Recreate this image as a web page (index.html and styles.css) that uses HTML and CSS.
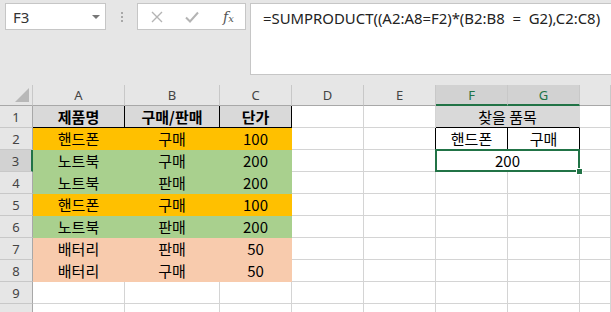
FILE: index.html
```html
<html>
<head>
    <title>SUMPRODUCT</title>
    <meta charset="UTF-8"/>
    <link rel="stylesheet" href="styles.css">
</head>
<body>
    <div class="toolbar">
        <div class="namebox">
            <span>F3</span>
            <span class="drop"></span>
        </div>
        <div class="grip"><i></i><i></i><i></i></div>
        <div class="fxbox">
            <svg class="ico" width="12" height="12" viewBox="0 0 12 12"><path d="M1 1L11 11M11 1L1 11" stroke="#b4b4b4" stroke-width="1.4" fill="none"/></svg>
            <svg class="ico" width="14" height="12" viewBox="0 0 14 12"><path d="M1 6.5L5 10.5L13 1.5" stroke="#b4b4b4" stroke-width="2" fill="none"/></svg>
            <span class="fx">f<small>x</small></span>
        </div>
        <div class="formula">=SUMPRODUCT((A2:A8=F2)*(B2:B8&nbsp; =&nbsp; G2),C2:C8)</div>
    </div>

    <div class="sheet">
        <div class="hd corner"><span class="tri"></span></div>
        <div class="hd col">A</div>
        <div class="hd col">B</div>
        <div class="hd col">C</div>
        <div class="hd col">D</div>
        <div class="hd col">E</div>
        <div class="hd col sel">F</div>
        <div class="hd col sel">G</div>
        <div class="hd col"></div>

        <div class="hd row">1</div>
        <div class="c th">제품명</div>
        <div class="c th">구매/판매</div>
        <div class="c th">단가</div>
        <div class="c"></div>
        <div class="c"></div>
        <div class="c gray span2">찾을 품목</div>
        <div class="c"></div>

        <div class="hd row">2</div>
        <div class="c orange">핸드폰</div>
        <div class="c orange">구매</div>
        <div class="c orange">100</div>
        <div class="c"></div>
        <div class="c edge-r"></div>
        <div class="c boxed">핸드폰</div>
        <div class="c boxed">구매</div>
        <div class="c"></div>

        <div class="hd row rsel">3</div>
        <div class="c green">노트북</div>
        <div class="c green">구매</div>
        <div class="c green">200</div>
        <div class="c"></div>
        <div class="c"></div>
        <div class="c span2 active">200</div>
        <div class="c"></div>

        <div class="hd row">4</div>
        <div class="c green">노트북</div>
        <div class="c green">판매</div>
        <div class="c green">200</div>
        <div class="c"></div><div class="c"></div><div class="c"></div><div class="c"></div><div class="c"></div>

        <div class="hd row">5</div>
        <div class="c orange">핸드폰</div>
        <div class="c orange">구매</div>
        <div class="c orange">100</div>
        <div class="c"></div><div class="c"></div><div class="c"></div><div class="c"></div><div class="c"></div>

        <div class="hd row">6</div>
        <div class="c green">노트북</div>
        <div class="c green">판매</div>
        <div class="c green">200</div>
        <div class="c"></div><div class="c"></div><div class="c"></div><div class="c"></div><div class="c"></div>

        <div class="hd row">7</div>
        <div class="c peach">배터리</div>
        <div class="c peach">판매</div>
        <div class="c peach">50</div>
        <div class="c"></div><div class="c"></div><div class="c"></div><div class="c"></div><div class="c"></div>

        <div class="hd row">8</div>
        <div class="c peach">배터리</div>
        <div class="c peach">구매</div>
        <div class="c peach">50</div>
        <div class="c"></div><div class="c"></div><div class="c"></div><div class="c"></div><div class="c"></div>

        <div class="hd row">9</div>
        <div class="c"></div><div class="c"></div><div class="c"></div><div class="c"></div>
        <div class="c"></div><div class="c"></div><div class="c"></div><div class="c"></div>

        <!-- row 10, only its top edge is in view -->
        <div class="hd row"></div>
        <div class="c"></div><div class="c"></div><div class="c"></div><div class="c"></div>
        <div class="c"></div><div class="c"></div><div class="c"></div><div class="c"></div>
    </div>
</body>
</html>
```
FILE: styles.css
```css
html, body {
    margin: 0;
    height: 312px;
    overflow: hidden;
    background: #fff;
    font-family: "Noto Sans", "Noto Sans CJK KR", sans-serif;
}
.toolbar {
    display: flex;
    align-items: flex-start;
    height: 85px;
    box-sizing: border-box;
    padding: 3px 0 0 5px;
    background: #e6e6e6;
}
.namebox {
    flex: 0 0 101px;
    height: 27px;
    box-sizing: border-box;
    border: 1px solid #c6c6c6;
    background: #fff;
    display: flex;
    align-items: center;
    justify-content: space-between;
    padding: 0 5px 0 7px;
    font-size: 15px;
    color: #333;
}
.drop {
    width: 0;
    height: 0;
    border-left: 4px solid transparent;
    border-right: 4px solid transparent;
    border-top: 4px solid #777;
}
.grip {
    flex: 0 0 31px;
    height: 27px;
    display: flex;
    flex-direction: column;
    align-items: center;
    justify-content: center;
    gap: 2px;
}
.grip i {
    width: 2px;
    height: 2px;
    background: #a8a8a8;
}
.fxbox {
    flex: 0 0 109px;
    height: 27px;
    box-sizing: border-box;
    border: 1px solid #c6c6c6;
    background: #fff;
    display: flex;
    align-items: center;
    padding: 0 0 0 13px;
}
.fxbox .ico {
    margin-right: 22px;
}
.fxbox .ico + .ico {
    margin-right: 24px;
}
.fx {
    font-family: "DejaVu Serif", serif;
    font-style: italic;
    font-size: 14px;
    color: #555;
}
.fx small {
    font-size: 10px;
}
.formula {
    flex: 1;
    min-width: 0;
    margin-left: 4px;
    height: 72px;
    box-sizing: border-box;
    border: 1px solid #c6c6c6;
    border-right: 0;
    background: #fff;
    padding: 4px 0 0 12px;
    font-size: 14.9px;
    color: #222;
    white-space: nowrap;
    overflow: hidden;
}
.sheet {
    display: grid;
    grid-template-columns: 33px 92px 95px 72px 72px 72px 72px 72px 1fr;
    grid-template-rows: 21px;
    grid-auto-rows: 22px;
    font-family: "Noto Sans CJK KR", sans-serif;
}
.sheet > div {
    box-sizing: border-box;
    border-right: 1px solid #d4d4d4;
    border-bottom: 1px solid #d4d4d4;
    display: flex;
    align-items: center;
    justify-content: center;
}
.hd {
    background: #e6e6e6;
    color: #444;
    font-family: "Noto Sans", sans-serif;
    font-size: 13px;
}
.sheet > .col {
    border-right-color: #c8c8c8;
    border-bottom-color: #a8a8a8;
}
.sheet > .row {
    border-right-color: #a8a8a8;
    border-bottom-color: #c8c8c8;
}
.sheet > .corner {
    border-right-color: #c8c8c8;
    border-bottom-color: #a8a8a8;
    position: relative;
}
.tri {
    position: absolute;
    right: 3px;
    bottom: 3px;
    width: 14px;
    height: 14px;
    background: #b8b8b8;
    clip-path: polygon(100% 0, 100% 100%, 0 100%);
}
.sheet > .sel {
    background: #d2d2d2;
    color: #217346;
    border-bottom: 2px solid #217346;
}
.sheet > .rsel {
    background: #d2d2d2;
    border-right: 2px solid #217346;
}
.c {
    font-size: 15px;
    color: #000;
}
.sheet > .th {
    background: #d9d9d9;
    font-weight: bold;
    border-color: #000;
}
.sheet > .gray {
    background: #d9d9d9;
    border-right-color: #d9d9d9;
    border-bottom-color: #000;
}
.span2 {
    grid-column: span 2;
}
.sheet > .orange {
    background: #ffc000;
    border-color: #ffc000;
}
.sheet > .green {
    background: #a9d08e;
    border-color: #a9d08e;
}
.sheet > .peach {
    background: #f8cbad;
    border-color: #f8cbad;
}
.sheet > .edge-r {
    border-right-color: #000;
}
.sheet > .boxed {
    border-right-color: #000;
    border-bottom-color: #000;
}
.active {
    position: relative;
}
.active::after {
    content: "";
    position: absolute;
    left: -1px;
    top: -1px;
    right: -1px;
    bottom: -1px;
    border: 2px solid #217346;
}
.active::before {
    content: "";
    position: absolute;
    right: -4px;
    bottom: -4px;
    width: 5px;
    height: 5px;
    background: #217346;
    border: 1px solid #fff;
    z-index: 1;
}
```
